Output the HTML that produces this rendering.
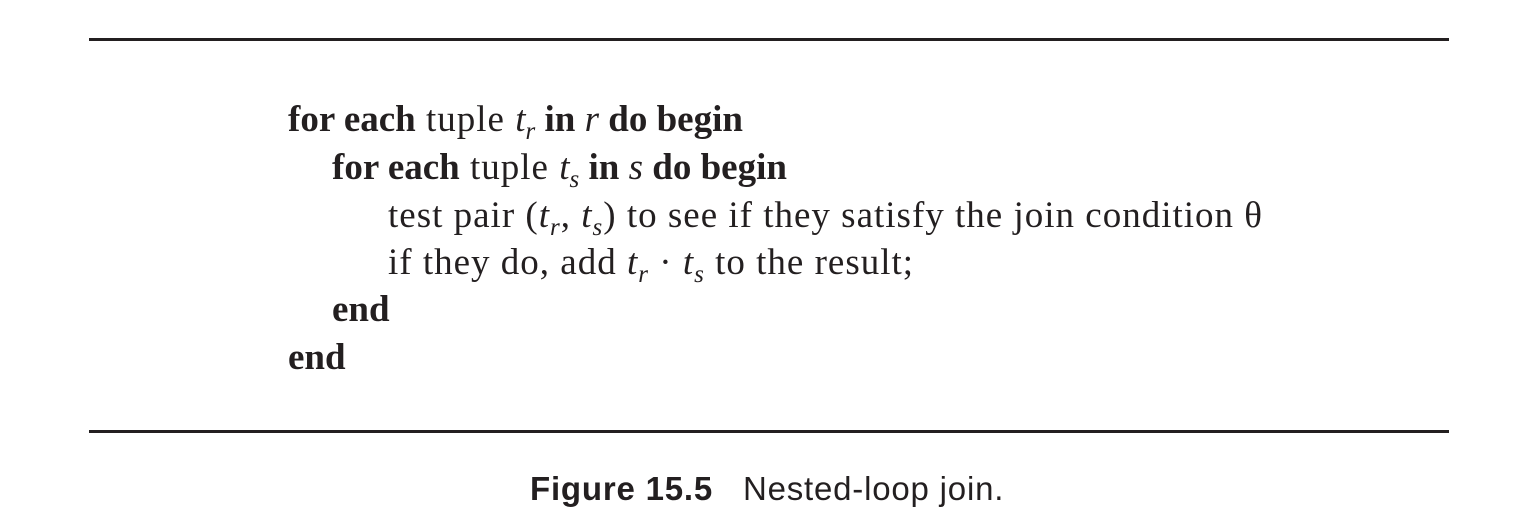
<!DOCTYPE html>
<html><head><meta charset="utf-8"><style>
html,body{margin:0;padding:0;background:#fff;}
body{width:1528px;height:526px;position:relative;overflow:hidden;color:#231f20;}
.rule{position:absolute;left:89px;width:1360px;height:3px;background:#231f20;}
.l{position:absolute;font-family:"Liberation Serif",serif;font-size:37px;line-height:1;white-space:nowrap;}
.l b{font-weight:bold;letter-spacing:0;}
.r{letter-spacing:1px;}
sub{font-size:25px;vertical-align:-8px;line-height:0;font-style:italic;}
i{font-style:italic;}
.cap{position:absolute;left:530px;top:472px;font-family:"Liberation Sans",sans-serif;font-size:33px;line-height:1;white-space:nowrap;letter-spacing:0.8px;}
</style></head><body>
<div class="rule" style="top:38px"></div>
<div class="rule" style="top:430px"></div>
<div class="l" style="left:288px;top:101px"><b>for each</b><span class="r"> tuple </span><i>t</i><sub>r</sub> <b>in</b> <i>r</i> <b>do begin</b></div>
<div class="l" style="left:332px;top:149px"><b>for each</b><span class="r"> tuple </span><i>t</i><sub>s</sub> <b>in</b> <i>s</i> <b>do begin</b></div>
<div class="l r" style="left:388px;top:197px">test pair (<i>t</i><sub>r</sub>, <i>t</i><sub>s</sub>) to see if they satisfy the join condition θ</div>
<div class="l r" style="left:388px;top:244px">if they do, add <i>t</i><sub>r</sub> · <i>t</i><sub>s</sub> to the result;</div>
<div class="l" style="left:332px;top:291px"><b>end</b></div>
<div class="l" style="left:288px;top:339px"><b>end</b></div>
<div class="cap"><b>Figure 15.5</b>&nbsp;&nbsp;&nbsp;Nested-loop join.</div>
</body></html>
